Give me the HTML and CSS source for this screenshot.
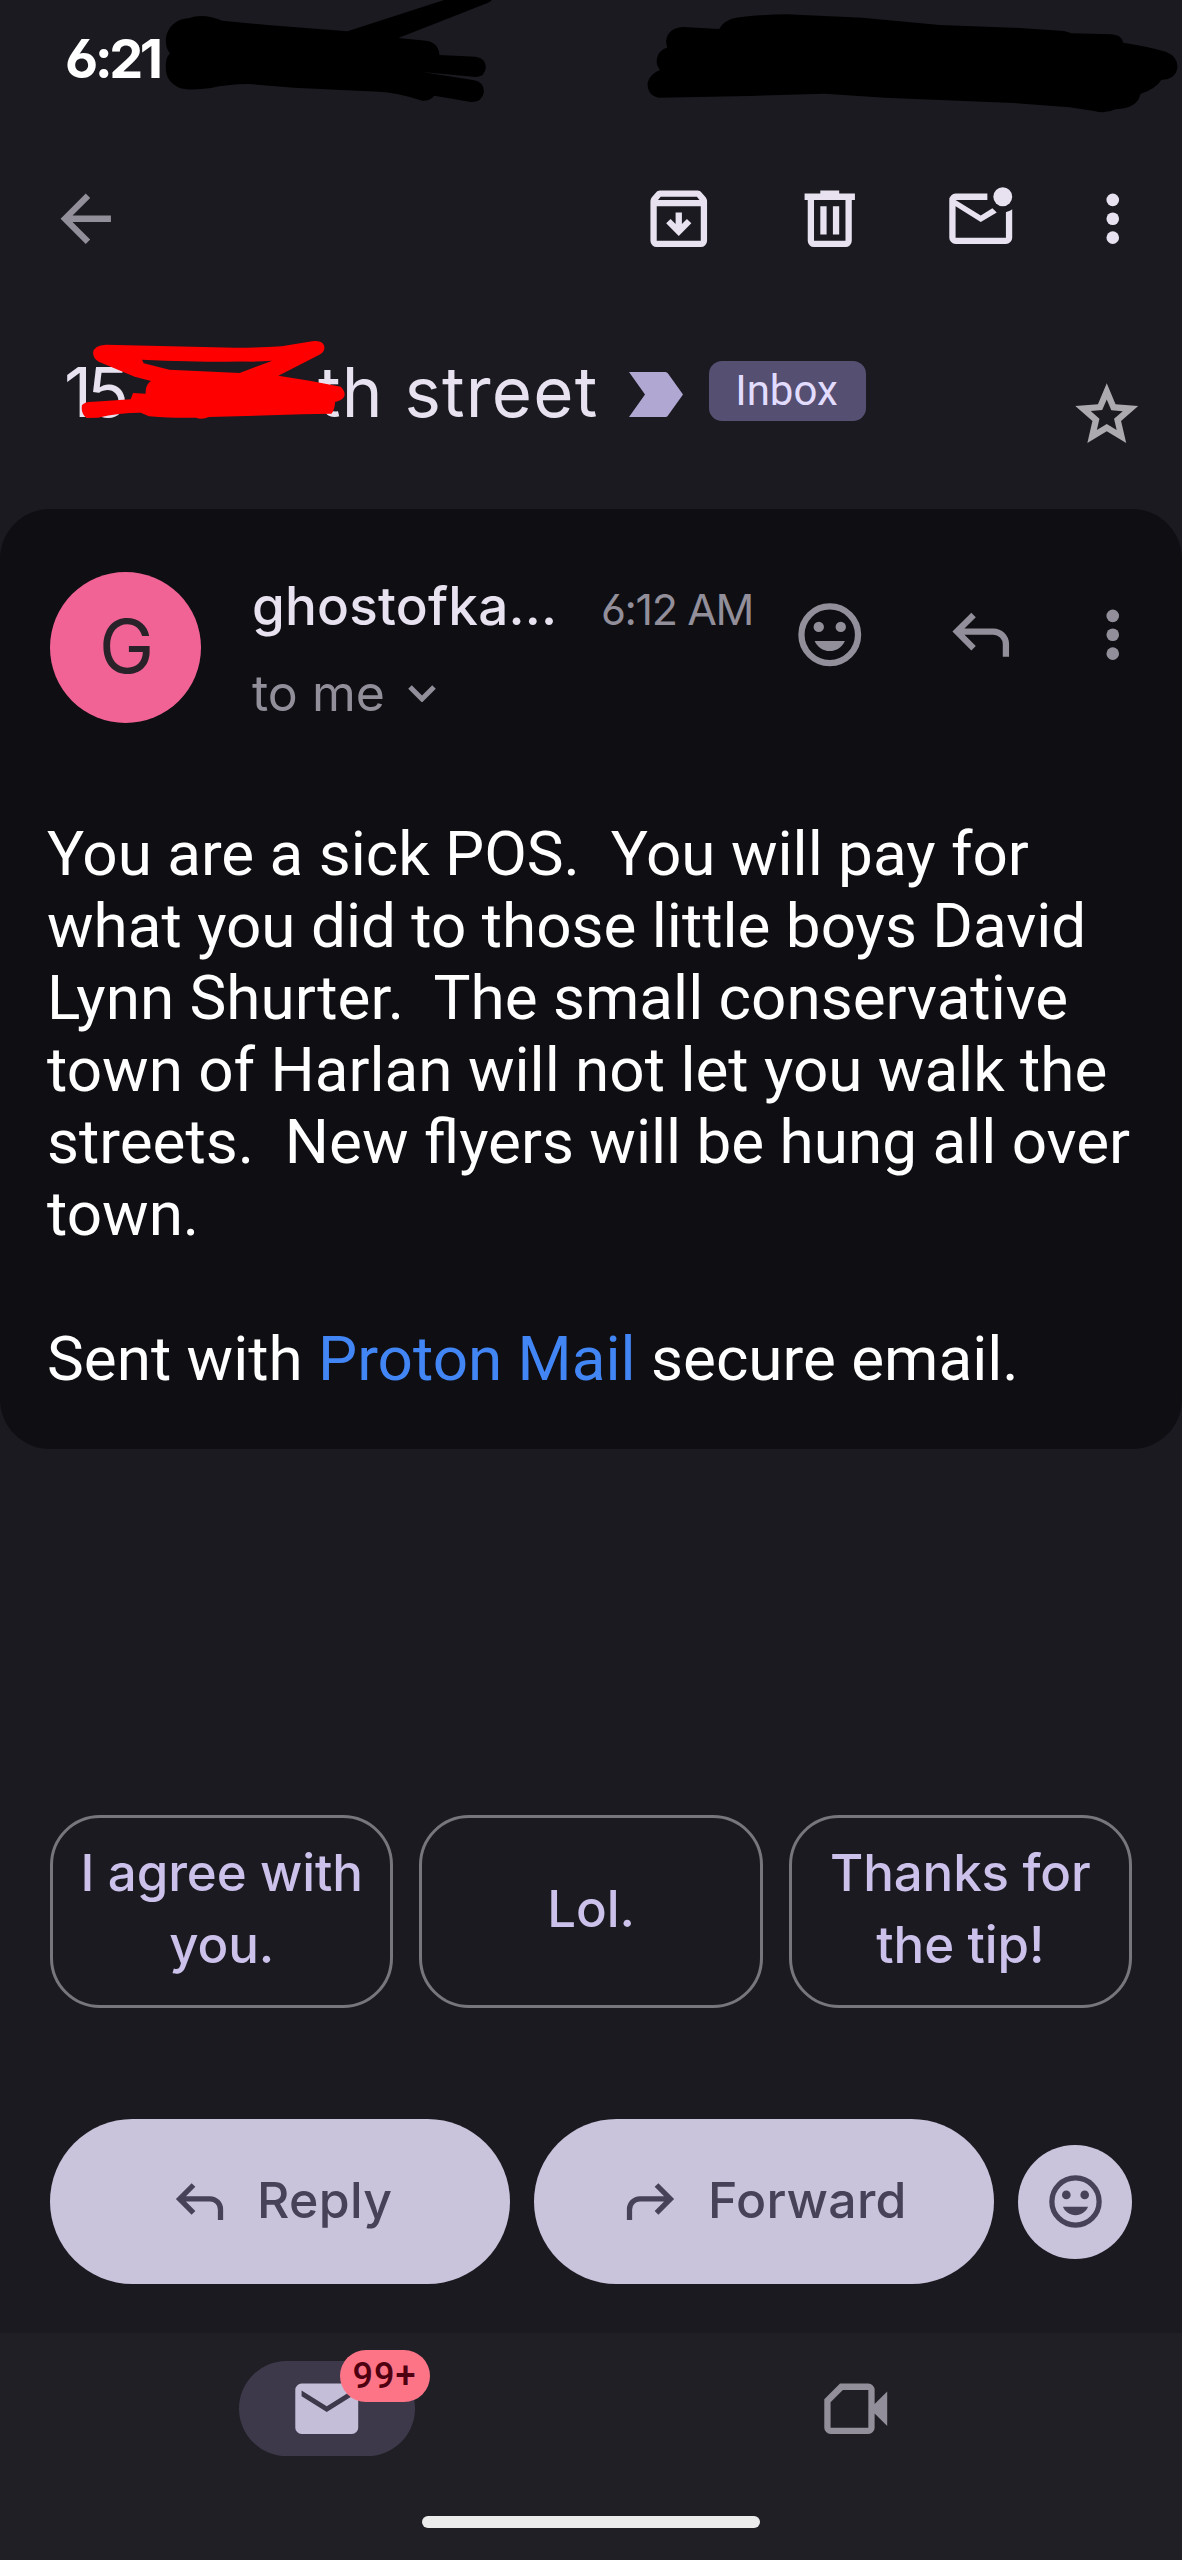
FILE: index.html
```html
<!DOCTYPE html>
<html lang="en">
<head>
<meta charset="utf-8">
<title>Mail</title>
<link rel="stylesheet" href="styles.css">
</head>
<body>
<svg width="0" height="0" class="defs">
  <symbol id="reply" viewBox="0 -960 960 960"><path d="M760-200v-160q0-50-35-85t-85-35H273l144 144-57 56-240-240 240-240 57 56-144 144h367q83 0 141.500 58.500T840-360v160h-80Z"/></symbol>
  <symbol id="smile" viewBox="0 0 24 24"><circle cx="12" cy="12" r="9" fill="none" stroke="currentColor" stroke-width="2"/><circle cx="8.500" cy="9.500" r="1.650"/><circle cx="15.500" cy="9.500" r="1.650"/><path d="M7.200 14h9.600c-.8 1.900-2.600 3.200-4.800 3.200S8 15.900 7.200 14Z"/></symbol>
  <symbol id="more" viewBox="0 0 24 24"><circle cx="12" cy="6" r="2"/><circle cx="12" cy="12" r="2"/><circle cx="12" cy="18" r="2"/></symbol>
</svg>
<div class="phone">
  <header class="status">
    <span class="clock">6:21</span>
    <svg class="ink ink-left" viewBox="0 0 1568 780" preserveAspectRatio="none"><path d="M440 125C440 85 465 57 500 55Q540 38 590 62L710 75L922 94L1178 0H1305Q1300 8 1280 15L1057 114L1130 122Q1163 126 1166 165L1262 170Q1289 174 1289 202Q1287 231 1262 231L1120 216L1255 240Q1284 245 1284 275Q1280 306 1250 306L1152 287Q1142 303 1120 302Q1050 276 1005 275L780 263L660 252Q600 253 560 264Q500 273 475 263Q440 245 440 205Q438 175 451 160Q440 145 440 125Z"/></svg>
    <svg class="ink ink-right" viewBox="0 0 1568 780" preserveAspectRatio="none"><path d="M199 125Q202 84 245 81L340 87Q355 55 400 51Q460 43 520 43L720 53L925 75L1120 83L1255 93L1275 100L1380 103Q1408 104 1412 128Q1480 140 1525 155Q1557 170 1556 202Q1552 238 1513 240Q1500 265 1458 282Q1450 325 1392 328Q1365 342 1335 333L1270 322L1120 309L780 293L620 281L420 288L180 293Q150 288 150 250Q155 222 183 210Q168 190 178 165Q185 148 202 143Z"/></svg>
  </header>

  <nav class="toolbar">
    <svg class="icon back" viewBox="0 0 24 24"><path d="m12 4 1.400 1.400L7.800 11H20v2H7.800l5.600 5.600L12 20l-8-8Z"/></svg>
    <svg class="icon archive" viewBox="0 0 24 24"><path fill-rule="evenodd" d="M5 21q-.82 0-1.410-.59T3 19V6.500q0-.4.120-.7t.33-.6l1.400-1.650q.2-.27.5-.41T6 3h12q.35 0 .65.140t.5.410l1.400 1.650q.2.300.33.600t.12.700V19q0 .820-.59 1.410T19 21ZM5.400 6h13.200l-.85-1H6.250ZM5 19h14V8H5Z"/><path d="m12 17.500 4-4.100-1.400-1.300-1.600 1.600V10h-2v3.700l-1.600-1.600L8 13.400Z"/></svg>
    <svg class="icon trash" viewBox="0 0 24 24"><path fill-rule="evenodd" d="M7 21q-.83 0-1.410-.59T5 19V6H4V4h5V3h6v1h5v2h-1v13q0 .830-.59 1.410T17 21ZM17 6H7v13h10ZM9 17h2V8H9Zm4 0h2V8h-2Z"/></svg>
    <svg class="icon unread" viewBox="0 0 24 24"><path d="M4 20q-.82 0-1.410-.59T2 18V6q0-.82.590-1.410T4 4h10.100v2H4l8 5 3.700-2.350 1.400 1.350L12 13 4 8v10h16V9.900q.57-.12 1.070-.34T22 9v9q0 .820-.59 1.410T20 20Z"/><circle cx="19" cy="5" r="3"/></svg>
    <svg class="icon kebab"><use href="#more"/></svg>
  </nav>

  <section class="subject">
    <h1 class="title"><span class="number">15</span><span class="street">th street</span></h1>
    <svg class="marker" viewBox="0 0 54 45"><path d="M0 0H36.500Q38 0 39 1.500L54 22.500 39 43.500Q38 45 36.500 45H0L16 22.500Z"/></svg>
    <span class="label">Inbox</span>
    <svg class="icon star" viewBox="0 0 24 24"><path fill-rule="evenodd" d="m8.850 16.830 3.150-1.900 3.150 1.930-.83-3.600 2.780-2.400-3.650-.33L12 7.130l-1.450 3.370-3.650.33 2.780 2.420ZM5.830 21l1.620-7.030L2 9.250l7.200-.62L12 2l2.800 6.630 7.200.620-5.450 4.720L18.180 21 12 17.270Z"/></svg>
    <svg class="ink ink-red" viewBox="0 0 1568 600" preserveAspectRatio="none"><path fill-rule="evenodd" d="M228 128Q230 106 260 104L575 113Q640 113 690 109L765 94Q792 89 795 112Q795 128 780 136L682 197L762 213L835 230Q850 250 841 264Q835 272 821 276Q820 300 812 311L740 313L512 321Q495 330 480 323Q430 325 365 319L345 308Q290 308 240 323L212 324Q197 310 201 285Q208 274 230 275L320 268L326 249L357 251Q355 225 370 213L330 200L242 155Q228 145 228 128ZM348 149L352 160L415 179L587 189L667 152Q550 160 348 149Z"/></svg>
  </section>

  <main class="message">
    <div class="sender">
      <div class="avatar">G</div>
      <div class="who">
        <div class="line"><span class="name">ghostofka...</span><span class="time">6:12 AM</span></div>
        <div class="line"><span class="to">to me</span><svg class="chevron" viewBox="0 0 28 17"><path d="m2 2 12 12L26 2"/></svg></div>
      </div>
      <svg class="icon act-smile"><use href="#smile"/></svg>
      <svg class="icon act-reply"><use href="#reply"/></svg>
      <svg class="icon act-more"><use href="#more"/></svg>
    </div>
    <p class="text">You are a sick POS.&nbsp; You will pay for<br>what you did to those little boys David<br>Lynn Shurter.&nbsp; The small conservative<br>town of Harlan will not let you walk the<br>streets.&nbsp; New flyers will be hung all over<br>town.<br><br>Sent with <a class="link">Proton Mail</a> secure email.</p>
  </main>

  <section class="chips">
    <div class="chip">I agree with<br>you.</div>
    <div class="chip">Lol.</div>
    <div class="chip">Thanks for<br>the tip!</div>
  </section>

  <section class="actions">
    <div class="pill"><svg class="small"><use href="#reply"/></svg><span class="reply-text">Reply</span></div>
    <div class="pill"><svg class="small flip"><use href="#reply"/></svg><span class="forward-text">Forward</span></div>
    <div class="round"><svg class="small"><use href="#smile"/></svg></div>
  </section>

  <footer class="tabs">
    <div class="tab">
      <div class="active">
        <svg class="icon mail" viewBox="0 0 24 24"><path fill-rule="evenodd" d="M4 20q-.82 0-1.410-.59T2 18V6q0-.82.590-1.410T4 4h16q.820 0 1.410.590T22 6v12q0 .820-.59 1.410T20 20ZM12 13l8-5V6.200l-8 5-8-5V8Z"/></svg>
        <span class="badge">99+</span>
      </div>
    </div>
    <div class="tab">
      <svg class="icon video" viewBox="0 0 24 24"><path fill-rule="evenodd" d="M4 20q-.82 0-1.410-.59T2 18V9l5-5h9q.820 0 1.410.590T18 6v4.500l4-4v11l-4-4V18q0 .820-.59 1.410T16 20ZM4 18h12V6H7.900L4 9.900Z"/></svg>
    </div>
    <div class="home"></div>
  </footer>
</div>
</body>
</html>
```
FILE: styles.css
```css
* { box-sizing: border-box; }
body { margin: 0; background: #1b1a20; font-family: Inter, "Open Sans", sans-serif; }
.defs { position: absolute; }
.phone { position: relative; width: 1182px; height: 2560px; display: flex; flex-direction: column; overflow: hidden; background: #1b1a20; }
svg { display: block; fill: currentColor; flex: none; }
.icon { width: 75.5px; height: 75.5px; }
.ink { position: absolute; }

.status { height: 140px; padding: 30px 0 0 65px; }
.clock { display: block; color: #fff; font-size: 54px; line-height: 58px; font-weight: 700; letter-spacing: -3.5px; font-feature-settings: "cv03", "cv04"; }
.ink-left { left: 0; top: 0; width: 591px; height: 260px; fill: #000; }
.ink-right { left: 591px; top: 0; width: 591px; height: 260px; fill: #000; }

.toolbar { height: 157px; display: flex; align-items: center; color: #e8e2f0; padding-left: 48px; }
.back { color: #928f9a; }
.archive { margin-left: 517.5px; }
.trash { margin-left: 75.5px; }
.unread { margin-left: 75.5px; }
.kebab { margin-left: 56.5px; }

.subject { position: relative; height: 212px; display: flex; align-items: flex-start; padding: 1px 0 0 64px; }
.title { margin: 49px 0 0; width: 565px; display: flex; color: #e8e2f0; font-size: 69px; line-height: 90px; font-weight: 400; }
.number { width: 254px; letter-spacing: -5px; }
.street { letter-spacing: 1.2px; white-space: nowrap; }
.marker { width: 54px; height: 45px; margin-top: 74px; color: #b0a7d3; }
.label { width: 157px; height: 60px; margin: 63px 0 0 26px; padding-right: 2px; border-radius: 13px; background: #554f72; color: #e2dcff; font: 400 42px/60px Roboto, sans-serif; text-align: center; }
.star { margin: 79px 0 0 203px; color: #acaaae; }
.ink-red { left: 0; top: 13px; width: 640px; height: 200px; fill: #f00; }

.message { height: 940px; border-radius: 50px; background: #0f0e13; }
.sender { height: 299px; display: flex; align-items: flex-start; padding: 63px 0 0 50px; color: #928f9a; }
.avatar { width: 151px; height: 151px; padding-left: 2px; border-radius: 50%; background: #f16394; color: #292329; font-size: 74px; line-height: 148px; text-align: center; }
.who { width: 539.5px; margin-left: 51px; }
.line { display: flex; align-items: baseline; height: 86px; line-height: 68px; white-space: nowrap; }
.name { width: 349px; color: #e8e2f0; font-size: 53px; font-weight: 550; letter-spacing: .2px; }
.time { font-size: 43px; letter-spacing: -1.400px; font-feature-settings: "cv03"; }
.to { width: 156px; font-size: 50px; line-height: 70px; }
.chevron { width: 28px; height: 17px; align-self: flex-start; margin-top: 27px; fill: none; stroke: #928f9a; stroke-width: 5; }
.act-smile { margin-top: 25px; }
.act-reply { margin: 25px 0 0 76px; }
.act-more { margin: 25px 0 0 56.5px; }
.text { margin: 0; padding: 10px 0 0 47px; color: #fff; font: 400 62px/72.100px Roboto, sans-serif; white-space: nowrap; }
.link { color: #4285f4; }

.chips { height: 193px; margin: 366px 50px 0; display: grid; grid-template-columns: repeat(3, 1fr); gap: 26px; }
.chip { display: flex; align-items: center; justify-content: center; padding-bottom: 5px; text-align: center; border: 3px solid #77767d; border-radius: 50px; color: #cbc1ea; font-size: 51px; line-height: 72px; font-weight: 500; letter-spacing: -.1px; white-space: nowrap; }

.actions { height: 165px; margin: 111px 50px 0; display: flex; align-items: center; gap: 24.500px; color: #474258; font-size: 50px; font-weight: 500; }
.pill { width: 459.500px; height: 165px; border-radius: 83px; background: #cac3dc; display: flex; align-items: center; padding-left: 118px; }
.small { width: 63px; height: 63px; }
.flip { transform: scaleX(-1); margin-left: -33px; }
.pill span { margin: 0 0 4px 26px; letter-spacing: .3px; }
.round { width: 114px; height: 114px; border-radius: 50%; background: #cac3dc; display: flex; align-items: center; justify-content: center; }

.tabs { position: relative; flex: 1; margin-top: 49px; background: #201f25; display: flex; padding: 28px 62px 0; }
.tab { flex: 1; display: flex; justify-content: center; }
.active { position: relative; width: 176px; height: 95px; border-radius: 48px; background: #3d394b; display: flex; align-items: center; justify-content: center; color: #c5bed8; }
.badge { position: absolute; left: 101px; top: -11px; width: 90px; height: 52px; border-radius: 26px; background: #fc7486; color: #4f0010; font: 500 36px/52px Roboto, sans-serif; letter-spacing: 1px; text-align: center; }
.video { margin-top: 10px; color: #928f9a; }
.home { position: absolute; left: 422px; bottom: 32px; width: 338px; height: 12px; border-radius: 6px; background: #ececec; }
```
